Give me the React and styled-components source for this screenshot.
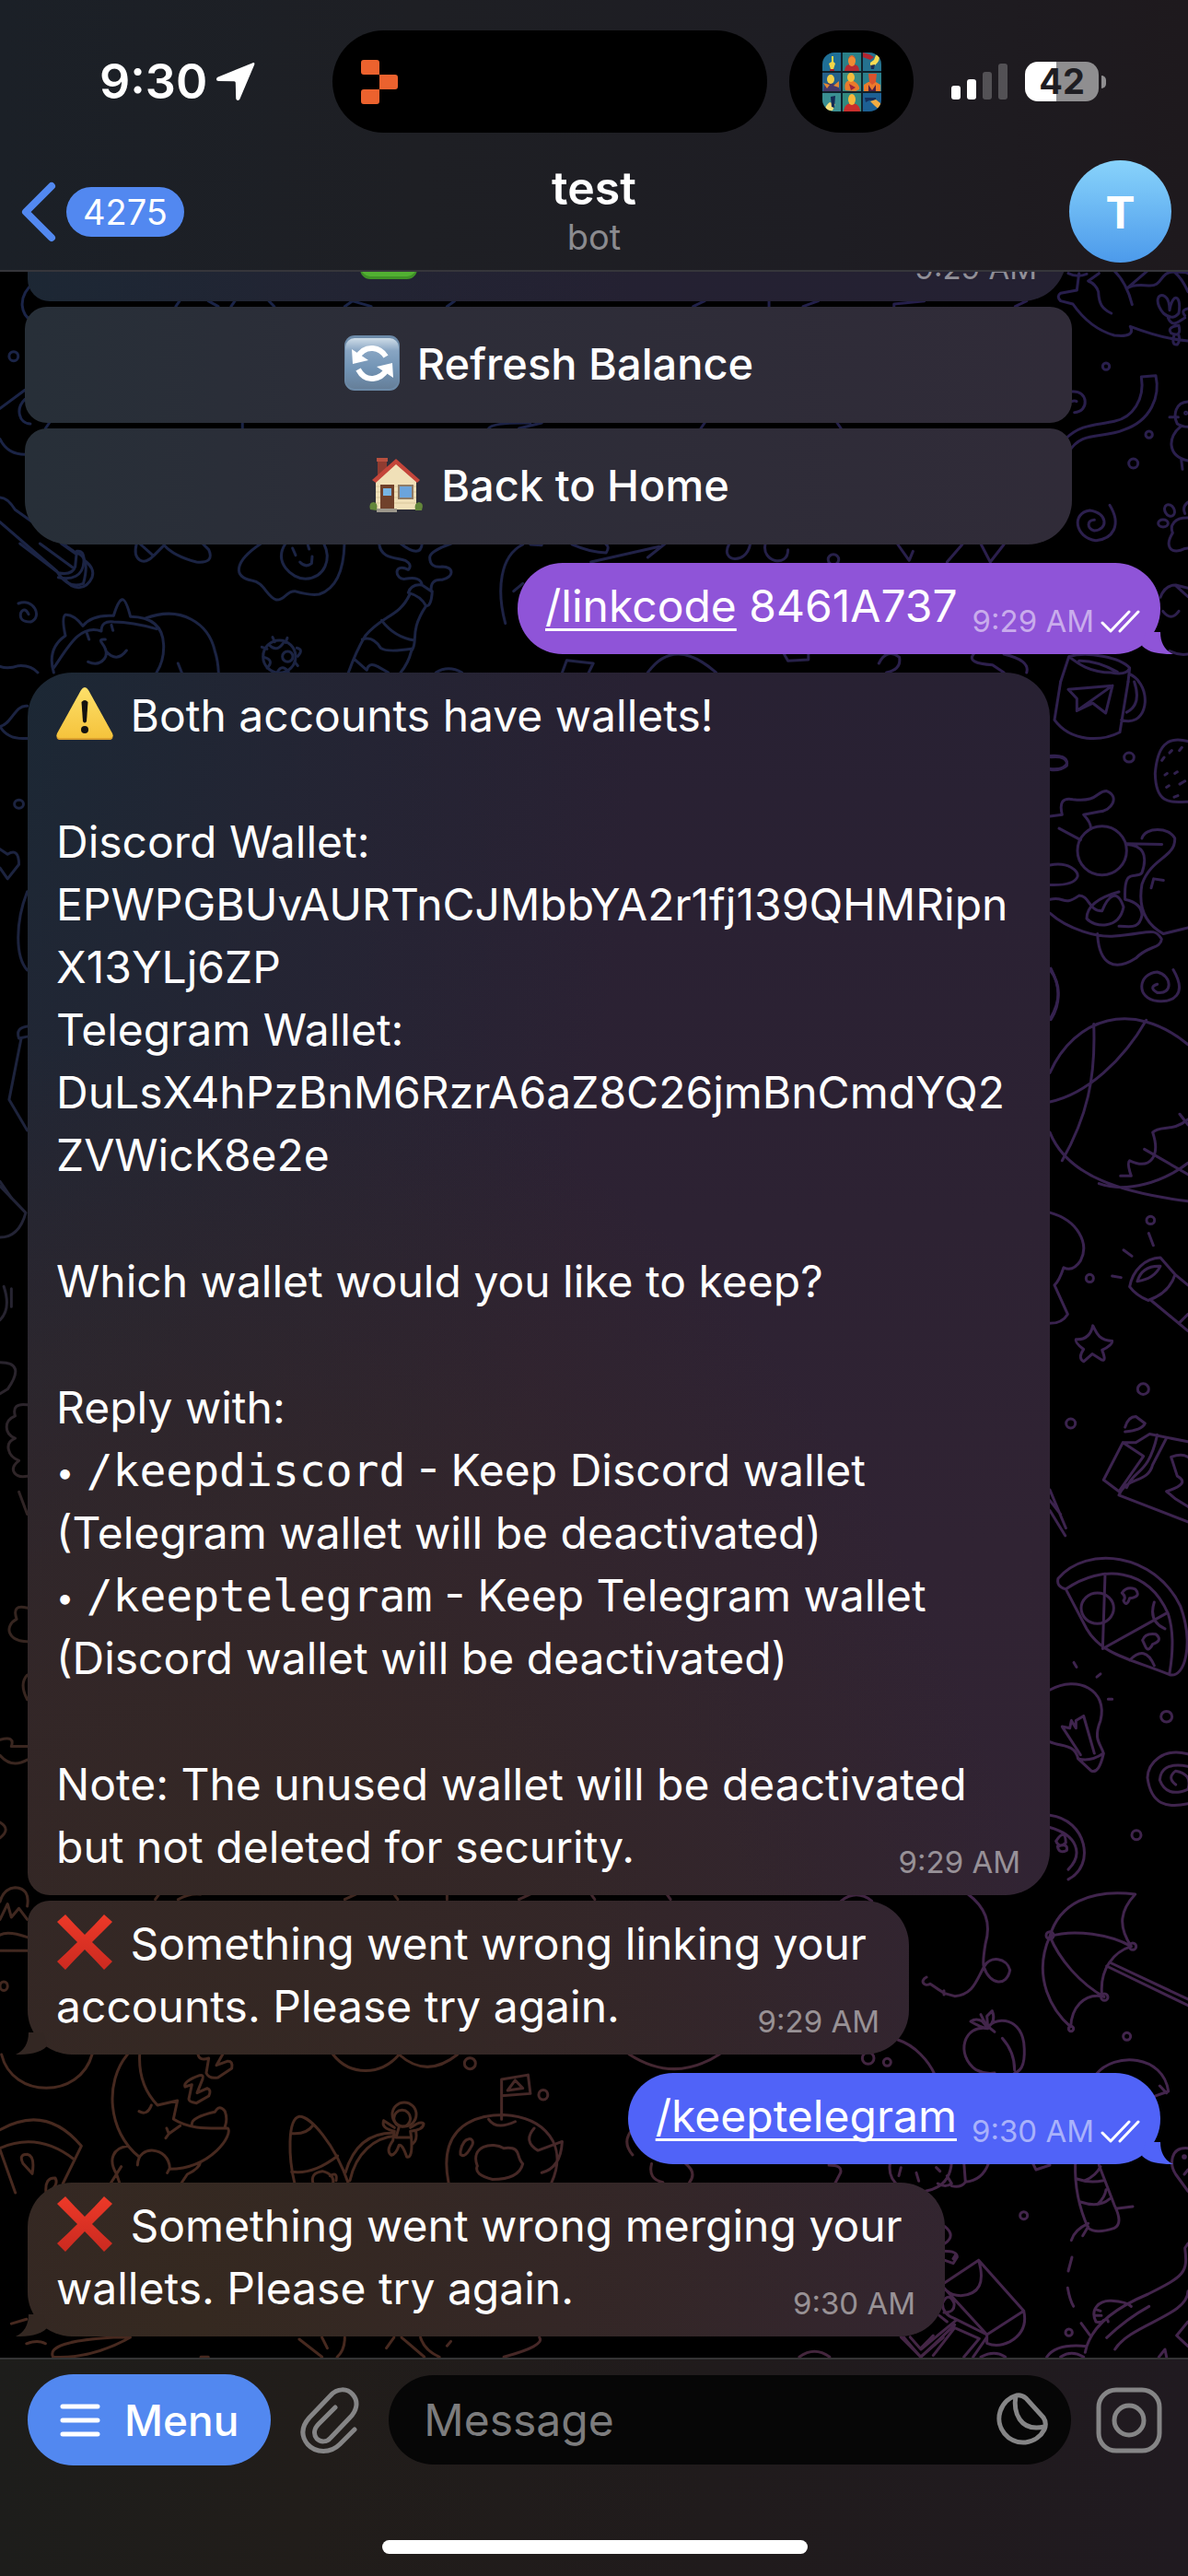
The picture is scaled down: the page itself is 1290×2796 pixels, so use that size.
import React from "react";
import styled, { createGlobalStyle } from "styled-components";

const GlobalStyle = createGlobalStyle`
  * { box-sizing: border-box; }
  html, body { margin: 0; background: #000; }
  body { font-family: Inter, "Liberation Sans", sans-serif; color: #fff; }
  button, input { font: inherit; color: inherit; border: 0; margin: 0; padding: 0; background: none; }
  button { cursor: pointer; }
  svg { display: block; }
`;

const Screen = styled.div`
  display: flex;
  flex-direction: column;
  height: 100vh;
  overflow: hidden;
`;

/* ---------- header ---------- */

const Header = styled.header`
  position: relative;
  padding: 33px 0 8px;
  border-bottom: 2px solid #36363b;
  background: linear-gradient(90deg, #1b2027 0%, #1e1f24 35%, #1e1d23 70%, #1e191d 100%);
`;

const StatusBar = styled.div`
  display: grid;
  grid-template-columns: 28% auto 1fr;
  align-items: center;
  height: 111px;
`;

const Clock = styled.div`
  display: flex;
  align-items: center;
  gap: 9px;
  padding-left: 108px;
  font-size: 52px;
  font-weight: 600;
`;

const Islands = styled.div`
  display: flex;
  gap: 24px;
`;

const Island = styled.div`
  display: flex;
  align-items: center;
  justify-content: ${(p) => (p.$center ? "center" : "flex-start")};
  width: ${(p) => p.$width}px;
  height: 111px;
  padding: ${(p) => (p.$center ? "0" : "0 31px")};
  border-radius: 56px;
  background: #000;
`;

const Indicators = styled.div`
  display: flex;
  align-items: center;
  gap: 19px;
  padding-left: 41px;
`;

const BatteryBox = styled.div`
  display: flex;
  align-items: center;
  gap: 3px;
`;

const BatteryLevel = styled.div`
  width: 80px;
  height: 43px;
  border-radius: 14px;
  background: linear-gradient(90deg, #fff 42%, #8f8e90 42%);
  color: #1e1d22;
  font-size: 38px;
  font-weight: 700;
  line-height: 43px;
  text-align: center;
`;

const BatteryCap = styled.div`
  width: 5px;
  height: 14px;
  border-radius: 0 5px 5px 0;
  background: #8f8e90;
`;

const NavBar = styled.nav`
  display: grid;
  grid-template-columns: 1fr auto 1fr;
  align-items: center;
  height: 111px;
  margin-top: 30px;
  padding: 0 18px;
`;

const BackButton = styled.button`
  display: flex;
  align-items: center;
  justify-self: start;
  gap: 10px;
  margin-left: 4px;
`;

const Badge = styled.span`
  padding: 0 18px;
  border-radius: 27px;
  background: #5288f0;
  font-size: 38px;
  line-height: 54px;
`;

const Titles = styled.div`
  align-self: start;
  text-align: center;
`;

const Title = styled.h1`
  margin: 0;
  font-size: 50px;
  font-weight: 600;
  line-height: 60px;
`;

const Subtitle = styled.p`
  margin: 0;
  color: #8b8b8f;
  font-size: 38px;
  line-height: 46px;
`;

const Avatar = styled.div`
  justify-self: end;
  width: 111px;
  height: 111px;
  border-radius: 50%;
  background: linear-gradient(#88d3fb, #4c9aeb);
  font-size: 48px;
  font-weight: 700;
  line-height: 113px;
  text-align: center;
`;

/* ---------- conversation ---------- */

const Conversation = styled.main`
  position: relative;
  display: flex;
  flex: 1 1 0;
  flex-direction: column;
  justify-content: flex-end;
  min-height: 0;
  overflow: hidden;
  padding: 0 30px 23px;
`;

const Wallpaper = styled.svg`
  position: absolute;
  inset: 0;
  width: 100%;
  height: 100%;
  path, circle, ellipse { vector-effect: non-scaling-stroke; }
`;

const Bubble = styled.article`
  position: relative;
  display: grid;
  flex: none;
  width: min(100%, ${(p) => p.$width}px);
  margin-top: ${(p) => (p.$joined ? 6 : 20)}px;
  padding: 13px 32px 18px 31px;
  border-radius: ${(p) => p.$corners};
  background:
    radial-gradient(ellipse 75% 50% at 16% 90%, #352920 0%, #342725d9 50%, #33262600 100%),
    radial-gradient(ellipse 60% 60% at -6% 22%, #192935 0%, #20273499 55%, #21263300 100%),
    linear-gradient(#242132 10%, #2a2133 35%, #302333 60%, #322433 90%);
  background-attachment: fixed;
  font-size: 48px;
  line-height: 68px;
`;

const Copy = styled.div`
  grid-area: 1 / 1;
  display: flex;
  flex-direction: column;
  gap: 69px;
`;

const Paragraph = styled.p`
  margin: 0;
  white-space: nowrap;
  padding-left: ${(p) => p.$indent || 0}px;
`;

const Bullet = styled.span`
  font-size: 34px;
  line-height: 1;
  vertical-align: 3px;
`;

const Command = styled.code`
  font-family: "DejaVu Sans Mono", monospace;
  font-size: 48px;
  line-height: 1;
`;

const Time = styled.time`
  grid-area: 1 / 1;
  place-self: end;
  color: ${(p) => p.$color || "rgba(255,255,255,0.5)"};
  font-size: 33px;
  line-height: 36px;
`;

const SentBubble = styled.article`
  position: relative;
  display: flex;
  flex: none;
  align-self: flex-end;
  align-items: flex-end;
  margin-top: 20px;
  padding: 13px 22px 18px 30px;
  border-radius: 49px;
  background: ${(p) => p.$color};
  font-size: 48px;
  line-height: 68px;
`;

const SentMeta = styled.div`
  display: flex;
  align-items: center;
  gap: 7px;
  margin-left: 16px;
`;

const CommandLink = styled.a`
  color: #fff;
  text-decoration: underline;
  text-decoration-thickness: 3px;
  text-decoration-skip-ink: none;
  text-underline-offset: 7px;
`;

const TailShape = styled.svg`
  position: absolute;
  bottom: 0;
  ${(p) => (p.$side === "left" ? "left: -13px; transform: scaleX(-1);" : "right: -14px;")}
`;

const InlineKeyboard = styled.div`
  display: flex;
  flex: none;
  flex-direction: column;
  gap: 6px;
  width: min(100% + 6px, 1137px);
  margin: 6px 0 0 -3px;
`;

const KeyButton = styled.button`
  position: relative;
  display: flex;
  align-items: center;
  justify-content: center;
  gap: 18px;
  height: 126px;
  padding-bottom: 4px;
  border-radius: ${(p) => (p.$last ? "24px 24px 48px 48px" : "24px")};
  background: linear-gradient(90deg, #272f38, #2d2d38 38%, #302b38);
  font-size: 47px;
  font-weight: 500;
`;

const EmojiSvg = styled.svg`
  display: inline-block;
  width: 62px;
  height: 60px;
  margin-right: ${(p) => (p.$inText ? 5 : 0)}px;
  vertical-align: -11px;
`;

/* ---------- composer ---------- */

const Composer = styled.footer`
  padding: 16px 28px 24px 30px;
  border-top: 2px solid #343435;
  background: linear-gradient(90deg, #1d1d1b, #211d1a 25%, #201b1c 60%, #201a20 100%);
`;

const InputRow = styled.form`
  display: flex;
  align-items: center;
  height: 99px;
`;

const MenuButton = styled.button`
  display: flex;
  align-items: center;
  gap: 26px;
  height: 99px;
  padding: 0 35px;
  border-radius: 50px;
  background: #5288f0;
  font-size: 46px;
  font-weight: 500;
`;

const AttachButton = styled.button`
  margin: 0 32px;
`;

const Field = styled.div`
  display: flex;
  flex: 1;
  align-items: center;
  min-width: 0;
  height: 97px;
  margin-right: 27px;
  padding: 0 25px 0 38px;
  border-radius: 49px;
  background: #060606;
`;

const MessageInput = styled.input`
  flex: 1;
  min-width: 0;
  outline: none;
  font-size: 48px;
  &::placeholder { color: #7c7c7d; opacity: 1; }
`;

const HomeIndicator = styled.div`
  width: 37.5%;
  height: 15px;
  margin: 81px auto 0;
  border-radius: 8px;
  background: #fff;
`;

/* ---------- drawings ---------- */

const LocationIcon = () => (
  <svg width="43" height="43" viewBox="0 0 43 43" fill="#fff">
    <path d="M40.500 1.200C42 .8 42.800 1.800 42.200 3.300L26.500 40.300C25.500 42.800 22.300 42.500 22.200 39.600L21.800 22.800Q21.800 21.300 20.300 21.300L3.500 20.900C.4 20.800 .2 17.600 2.900 16.500Z" />
  </svg>
);

const SignalIcon = () => (
  <svg width="61" height="40" viewBox="0 0 61 40" fill="#fff">
    <rect x="0" y="24" width="10" height="15" rx="3" />
    <rect x="17" y="17" width="10" height="22" rx="3" />
    <rect x="34" y="9" width="10" height="30" rx="3" opacity=".24" />
    <rect x="51" y="0" width="10" height="39" rx="3" opacity=".24" />
  </svg>
);

const BlocksLogo = () => (
  <svg width="40" height="48" viewBox="0 0 40 48" fill="#ec622e">
    <path d="M3 0H17Q20 0 20 3V16H3Q0 16 0 13V3Q0 0 3 0ZM20 16H37Q40 16 40 19V29Q40 32 37 32H20ZM3 32H20V45Q20 48 17 48H3Q0 48 0 45V35Q0 32 3 32Z" />
  </svg>
);

const thermalCells = [
  [0, 0, "#1f6f96"], [22, 0, "#2a8088"], [44, 0, "#25728e"],
  [0, 22, "#25618a"], [22, 22, "#3a8b82"], [44, 22, "#2b7f8c"],
  [0, 44, "#3a8f92"], [22, 44, "#318a80"], [44, 44, "#1d6093"],
];

const ThermalPhoto = () => (
  <svg width="64" height="64" viewBox="0 0 64 64">
    <clipPath id="photoClip"><rect width="64" height="64" rx="13" /></clipPath>
    <g clipPath="url(#photoClip)">
      <rect width="64" height="64" fill="#10222c" />
      {thermalCells.map(([x, y, fill]) => <rect key={`${x}-${y}`} x={x} y={y} width="20" height="20" fill={fill} />)}
      <path d="M10 4L12 4L12 10L14 12L12 18H9L7 12L10 10Z" fill="#f4d648" />
      <path d="M8 18H13V20H8Z" fill="#a3202f" />
      <path d="M24 20Q25 13 29 13H35Q40 14 40 20Z" fill="#b52a31" />
      <ellipse cx="32" cy="9" rx="4" ry="6" fill="#ef8b33" />
      <path d="M28 7Q32 1 36 7L35 5Q32 2 29 5Z" fill="#b52a31" />
      <path d="M44 0L51 2L56 5L52 8L44 5Z" fill="#b32631" />
      <path d="M62 2Q63 9 57 14L52 16L52 11L56 8L58 3Z" fill="#f5db55" />
      <path d="M52 14L57 13L56 18H53Z" fill="#182c57" />
      <path d="M1 42Q2 33 8 33L15 35L20 42Z" fill="#47396a" />
      <ellipse cx="9" cy="29" rx="4" ry="5" fill="#f5cf48" />
      <path d="M1 33L8 35L5 39ZM12 36L18 31L18 38Z" fill="#e28834" />
      <path d="M25 41Q23 34 27 31L34 31Q41 35 40 40L36 42Z" fill="#e97b2c" />
      <ellipse cx="31" cy="27" rx="4" ry="5" fill="#f4bb3c" />
      <path d="M29 34L36 38L31 41Z" fill="#9f2139" />
      <path d="M45 42V35L50 32H58L63 35V42Z" fill="#eb7b2b" />
      <path d="M50 23H59L58 32L54 35L51 32Z" fill="#d9532c" />
      <path d="M50 35L54 41L58 35V42H50Z" fill="#512043" />
      <path d="M2 64Q4 56 8 54L14 56L11 63Z" fill="#f3df7c" />
      <path d="M9 48L14 47L13 60L10 59Z" fill="#132a55" />
      <path d="M23 64Q24 56 30 55H34Q41 57 41 64Z" fill="#c92e2c" />
      <ellipse cx="32" cy="51" rx="4" ry="6" fill="#f6b83c" />
      <path d="M46 49H58V52H51L47 54Z" fill="#14305d" />
      <path d="M52 53L58 51L63 55V63L57 58Z" fill="#f2ad42" />
    </g>
  </svg>
);

const BackChevron = () => (
  <svg width="40" height="66" viewBox="0 0 40 66" fill="none" stroke="#5288f0" strokeWidth="8" strokeLinecap="round" strokeLinejoin="round">
    <path d="M34 5L6 33L34 61" />
  </svg>
);

const Checks = () => (
  <svg width="43" height="25" viewBox="0 0 43 25" fill="none" stroke="#fff" strokeWidth="3" strokeLinecap="round" strokeLinejoin="round">
    <path d="M2 14L11 23L31 2M21 23L41 2" />
  </svg>
);

const Tail = ({ side, color }) => (
  <TailShape $side={side} width="40" height="24" viewBox="0 0 40 24" fill={color} aria-hidden="true">
    <path d="M26 0C26 12 31 20 40 24C26 24 14 23 6 15L10 0Z" />
  </TailShape>
);

const RefreshEmoji = () => (
  <EmojiSvg viewBox="0 0 60 60">
    <defs><linearGradient id="refreshFill" x1="0" y1="0" x2="0" y2="1"><stop offset="0" stopColor="#cfdde8" /><stop offset=".25" stopColor="#88a5c3" /><stop offset=".6" stopColor="#7294b5" /><stop offset="1" stopColor="#667f99" /></linearGradient></defs>
    <rect width="60" height="60" rx="11" fill="#6c8aa8" />
    <rect x="1" y="3" width="58" height="55" rx="10" fill="url(#refreshFill)" />
    <g fill="none" stroke="#fff" strokeWidth="6">
      <path d="M14 24Q20 13 31 14Q40 15 45 23" />
      <path d="M15 37Q21 48 31 47Q41 46 46 37" />
    </g>
    <path d="M8 15L9 31L26 27Z" fill="#fff" />
    <path d="M53 46L52 30L35 34Z" fill="#fff" />
  </EmojiSvg>
);

const HouseEmoji = () => (
  <EmojiSvg viewBox="0 0 60 60">
    <path d="M10 2H20V14L10 24Z" fill="#8f3b30" /><path d="M9 1H21V5H9Z" fill="#b7503f" />
    <path d="M8 26L30 4L52 26V57H8Z" fill="#f0e0b8" />
    <path d="M8 32H52M8 38H52M8 44H52M8 50H52" stroke="#d9c79c" strokeWidth="1" />
    <path d="M4 25L30 2L56 25L53 28L30 8L8 28Z" fill="#c4453a" />
    <rect x="13" y="30" width="15" height="27" fill="#70412b" /><rect x="16" y="34" width="9" height="8" fill="#77b5e3" />
    <rect x="32" y="30" width="17" height="16" fill="#8e7b66" /><rect x="34" y="32" width="13" height="12" fill="#6ba4dc" />
    <rect x="9" y="56" width="22" height="4" fill="#9c978c" />
    <path d="M2 57Q0 49 6 49Q11 50 9 58ZM51 58Q49 50 55 49Q61 50 58 58Z" fill="#63863a" />
  </EmojiSvg>
);

const WarningEmoji = () => (
  <EmojiSvg $inText viewBox="0 0 62 60" aria-label="Warning">
    <defs><linearGradient id="warnFill" x1="0" y1="0" x2="0" y2="1"><stop offset="0" stopColor="#fde06a" /><stop offset="1" stopColor="#f5c33c" /></linearGradient></defs>
    <path d="M27 5Q31 -1 35 5L61 52Q63 58 57 58H5Q-1 58 1 52Z" fill="#d99f2e" />
    <path d="M27 4Q31 -2 35 4L61 51Q63 56 57 56H5Q-1 56 1 51Z" fill="url(#warnFill)" />
    <path d="M27.500 17Q31 13 34.500 17L33 38Q31 41 29 38Z" fill="#141210" /><circle cx="31" cy="47" r="4" fill="#141210" />
  </EmojiSvg>
);

const CrossEmoji = () => (
  <EmojiSvg $inText viewBox="0 0 62 60" aria-label="Error">
    <defs><linearGradient id="crossFill" x1="0" y1="0" x2="0" y2="1"><stop offset="0" stopColor="#ed3928" /><stop offset="1" stopColor="#cb2a20" /></linearGradient></defs>
    <path d="M10 0Q20 11 31 22Q42 11 52 0L61 8Q50 19 39 30Q50 41 61 51L52 60Q42 49 31 38Q20 49 10 60L1 51Q12 41 23 30Q12 19 1 8Z" fill="url(#crossFill)" />
  </EmojiSvg>
);

const CheckEmoji = () => (
  <EmojiSvg viewBox="0 0 62 60">
    <rect width="62" height="60" rx="11" fill="#3f9127" /><rect x="1" y="1" width="60" height="56" rx="10" fill="#52b032" />
    <path d="M15 33L26 46L46 13" fill="none" stroke="#fff" strokeWidth="7" />
  </EmojiSvg>
);

const MenuLines = () => (
  <svg width="44" height="36" viewBox="0 0 44 36" stroke="#fff" strokeWidth="5" strokeLinecap="round">
    <path d="M3 3H41M3 18H41M3 33H41" />
  </svg>
);

const ClipIcon = () => (
  <svg width="64" height="72" viewBox="0 0 64 72" fill="none" stroke="#858586" strokeWidth="5" strokeLinecap="round" strokeLinejoin="round">
    <path d="M59 46L43 62C33 72 17 72 8 62C0 52 2 42 10 33L33 9C40 1 51 1 57 8C64 16 61 26 54 33L33 55C29 60 22 60 18 56C14 51 15 45 20 40L38 22" />
  </svg>
);

const StickerIcon = () => (
  <svg width="58" height="60" viewBox="0 0 58 60" fill="none" stroke="#858586" strokeWidth="5" strokeLinejoin="round">
    <path d="M24 3Q29 2 34 6L53 27Q57 33 54 40A26 26 0 1 1 24 3Z" />
    <path d="M23 3C20 21 27 43 54 37" />
  </svg>
);

const CameraIcon = () => (
  <svg width="72" height="72" viewBox="0 0 72 72" fill="none" stroke="#858586" strokeWidth="5">
    <rect x="3" y="3" width="66" height="66" rx="19" /><circle cx="36" cy="36" r="16" />
  </svg>
);

/* Line art of the chat wallpaper. Each group keeps its own drawing scale. */
const Doodles = () => (
  <g fill="none" stroke="#fff" strokeWidth="3" strokeLinecap="round" strokeLinejoin="round">
    <g transform="translate(1140 290) scale(.33333)">
      <path d="M95 20L88 75L35 85Q20 95 35 110L75 120C110 170 150 205 210 222Q280 230 262 193C320 215 380 235 450 240" />
      <path d="M60 20Q90 35 120 22M160 20L125 45Q150 55 158 80C160 120 170 135 200 150M208 10C235 35 255 70 268 122M320 10L250 70Q270 55 320 60C370 65 355 15 405 15Q440 15 450 20M405 15Q430 35 450 80" />
      <path d="M390 140C400 80 430 90 420 150Q400 175 370 150C340 115 350 80 375 95Q390 105 390 140M385 165C400 200 420 175 440 165M420 190Q380 195 395 215Q430 230 420 190M405 220Q395 255 415 252Q425 240 420 222M450 135Q425 140 440 158" />
      <circle cx="183" cy="323" r="11" /><circle cx="323" cy="545" r="11" /><circle cx="272" cy="639" r="15" />
      <path d="M72 405C125 400 130 470 80 473M72 437Q80 433 87 437" />
      <path d="M298 357L345 353C360 420 330 500 240 530C170 560 100 530 60 605M298 357C310 430 270 490 210 502C150 515 100 510 50 560" />
      <path d="M195 775C235 840 205 885 150 890C80 880 70 800 130 792C190 800 190 855 145 858C120 850 120 825 145 823" />
      <path d="M450 438C410 440 400 480 415 510Q430 520 450 520M425 520C385 550 380 615 450 630M390 488H418M428 625L432 658" /><circle cx="443" cy="475" r="3" />
      <ellipse cx="390" cy="792" rx="15" ry="20" transform="rotate(-30 390 792)" /><ellipse cx="369" cy="834" rx="16" ry="12" />
      <path d="M450 765Q430 780 440 802M450 816C405 815 390 840 400 865C375 905 390 930 425 922Q440 915 450 915" />
      <path d="M360 1075Q375 1035 410 1035L450 1045M410 1037L450 1073M368 1120Q395 1155 420 1120M390 1250Q420 1265 450 1260" />
      <path d="M35 1350L62 1268C120 1250 230 1270 260 1305Q250 1330 200 1320C130 1320 90 1290 62 1268M95 1282Q150 1280 220 1318M260 1305L255 1350M260 1325Q280 1335 290 1350" />
    </g>
    <g transform="translate(1080 740) scale(.33333 .829)">
      <path d="M215 0L195 50C250 80 350 78 408 66L435 0M413 50C490 60 510 20 470 0M430 40Q480 30 455 0M240 10L384 5L362 41L320 28L268 38V22ZM268 38L384 5" />
      <path d="M180 97Q235 95 236 107Q225 116 180 114" /><ellipse cx="438" cy="99" rx="16" ry="6" /><ellipse cx="508" cy="705" rx="13" ry="5" /><ellipse cx="310" cy="781" rx="12" ry="5" /><ellipse cx="484" cy="926" rx="18" ry="7" /><ellipse cx="248" cy="971" rx="15" ry="6" /><ellipse cx="560" cy="1355" rx="18" ry="7" /><ellipse cx="462" cy="1510" rx="15" ry="6" />
      <path d="M630 78C560 70 530 85 523 120C525 160 570 158 630 157M545 103L552 99M570 93L577 90M602 90L610 86M555 122L562 120M587 120L595 118M560 138L568 136M603 134L620 130M585 151L597 149" />
      <path d="M180 176L220 174Q205 150 255 154C340 158 330 143 365 143C410 150 380 170 340 170L290 174Q315 185 313 192M210 192L280 207M180 240C240 235 275 248 270 255Q260 267 180 266M180 285C230 280 220 295 275 280C310 280 305 300 350 300C370 280 400 270 420 295C405 325 325 322 300 310C300 290 360 280 405 275M180 303C240 325 340 335 390 333C500 330 520 320 544 337C540 350 500 345 460 362C390 380 340 370 335 330" />
      <ellipse cx="350" cy="221" rx="80" ry="32" /><path d="M430 212L545 213M480 205C490 190 570 190 587 205C590 230 510 230 480 265Q460 310 550 330L630 322M430 213Q510 215 480 250C460 260 420 240 425 285Q480 290 480 306C470 325 440 320 405 320M510 270L518 258L550 260" />
      <path d="M180 377Q235 405 180 442M582 377C630 410 580 420 530 418C460 415 465 382 530 380C580 385 580 410 530 407Q500 400 530 396" />
      <path d="M180 512C260 440 450 415 630 475M180 590C240 650 430 670 630 680M180 550C300 540 420 495 494 443M323 448C330 520 300 570 220 627M340 657C430 670 550 655 630 630M410 647H445Q430 630 440 627C510 640 540 620 515 590C540 580 580 590 630 573M488 612L630 645M603 566L630 580" />
      <path d="M180 695C270 705 310 735 280 758C260 770 240 770 225 767Q210 785 195 790L238 828Q220 840 180 840M502 722L517 738M420 744L447 752M383 778L412 780M440 792C450 770 490 755 540 754L588 776Q570 800 500 810Q460 803 440 792M465 785Q480 764 540 765Q520 782 465 785M588 776L630 790M510 810L630 850M600 840L630 828" />
      <path d="M320 843C330 850 335 862 383 863Q385 868 350 875Q365 890 350 888L318 880L290 890Q270 885 290 874Q260 865 265 861Q310 862 320 843Z" />
      <path d="M355 1045L418 996H460L505 985L630 995M355 1045L405 1060L485 1014L418 996M405 1065C430 1040 500 1050 515 1025L560 990M430 1055C455 1030 500 1040 530 986M405 1065L630 1100M425 976Q435 962 460 962L490 971Q480 980 425 982M575 1015Q610 1010 630 1015M575 1015L595 1040Q640 1050 560 1060L590 1070L630 1080" />
      <path d="M180 1058L232 1108M180 1085L230 1118M180 1072L215 1090M207 1174C300 1130 520 1140 605 1210C650 1260 620 1305 570 1300C450 1280 350 1275 300 1240L232 1188Q200 1185 207 1174M232 1188C350 1155 500 1160 565 1220Q590 1250 570 1298M360 1168L352 1266L558 1220M440 1281Q490 1260 520 1288M555 1240Q500 1230 520 1205" /><ellipse cx="335" cy="1213" rx="53" ry="20" />
      <path d="M415 1193Q430 1184 458 1188Q480 1198 440 1200Q430 1212 420 1203Q430 1198 415 1193M482 1255Q490 1245 525 1247Q550 1255 515 1260Q500 1272 490 1262Z" />
      <path d="M180 1320C270 1300 370 1320 345 1360C320 1385 345 1390 355 1403Q340 1430 315 1426L272 1410C260 1390 220 1395 180 1388M272 1410Q310 1415 355 1403M325 1403L290 1354L265 1360V1370L250 1360L245 1370L220 1368L280 1405M258 1284L267 1290M345 1299L333 1303M370 1332H383" />
      <path d="M630 1404C550 1395 500 1415 498 1435C510 1470 560 1475 630 1469M630 1420C560 1415 540 1425 538 1438Q560 1462 630 1450Q645 1430 590 1426Q560 1435 590 1444" />
      <path d="M180 1484C300 1490 330 1550 240 1568M180 1500C270 1510 290 1535 240 1555M200 1518Q230 1500 232 1520Q210 1528 200 1518M205 1525Q240 1520 235 1530Q210 1535 205 1525" />
    </g>
    <g transform="translate(900 2050) scale(.33333)">
      <path d="M40 40Q90 0 140 40M450 15C510 60 530 110 510 180Q500 240 505 255C525 215 580 225 590 265C580 320 525 315 505 255C480 300 470 345 410 350L375 340L330 310C310 320 295 300 318 288M375 332L375 345" />
      <path d="M720 155C750 50 850 0 998 18C950 70 940 120 985 188C930 205 880 260 890 350C830 340 790 390 788 450C730 400 660 290 720 155ZM720 155C800 130 920 150 985 188M720 155C750 230 820 310 897 352M915 240L1170 360M905 252L1170 380" />
      <circle cx="720" cy="152" r="12" /><circle cx="990" cy="188" r="11" /><circle cx="898" cy="353" r="11" /><circle cx="789" cy="456" r="8" /><circle cx="971" cy="481" r="12" /><circle cx="128" cy="552" r="19" /><circle cx="190" cy="565" r="12" /><circle cx="635" cy="1064" r="12" /><circle cx="782" cy="1445" r="11" />
      <path d="M518 455C440 440 410 540 480 590Q510 605 540 600M518 455C530 420 620 410 635 500Q645 590 605 600M565 487C590 515 605 550 605 590M518 455Q490 450 462 432Q480 420 500 432L515 450L495 410M518 455L515 415L532 398Q545 430 520 450L540 466" />
      <path d="M225 492C280 510 325 560 345 605M870 605C930 530 1090 540 1106 660L1060 676M1078 642L1100 665" />
      <path d="M200 890Q190 940 230 970M235 908L228 935M285 925L293 952M350 908L362 920M315 985Q395 970 400 890M355 960Q380 975 400 960L385 935M440 890L445 955Q430 975 400 968M520 895Q500 950 445 955M0 900Q45 900 38 925L20 960M665 895L675 915L720 900" />
      <path d="M803 895C800 980 820 1050 845 1105Q870 1125 930 1105Q960 1090 930 1030L880 900M808 945Q850 960 895 950M820 1020Q880 1040 915 1010M835 950Q870 935 885 905M875 1028Q900 1005 903 980M935 1042L990 1035M790 1145Q800 1110 845 1090M827 1130L845 1100M792 1200L780 1245M778 1300Q785 1340 797 1360M822 1415L850 1453" />
      <path d="M1170 845C1110 840 1110 900 1130 930L1170 985M1158 930L1170 915" /><circle cx="1158" cy="873" r="4" />
      <path d="M378 1100Q415 1130 378 1155M375 1180Q420 1180 418 1200L405 1220L378 1210M415 1190L405 1205M375 1285L488 1210L635 1375L515 1452L375 1300M488 1210Q520 1320 430 1325Q400 1325 385 1310M635 1375Q650 1440 590 1475Q550 1495 515 1480L515 1452M515 1452L410 1400Q370 1385 370 1350Q390 1310 408 1350Q412 1380 375 1380M300 1500L415 1405M235 1460L300 1525L410 1420M340 1520L410 1430L490 1465L440 1525M515 1460L470 1525M360 1390L385 1410M265 1460L298 1498L340 1455M495 1525Q540 1500 575 1525" />
      <path d="M710 1525Q740 1480 840 1490L835 1510M755 1525Q790 1500 830 1525M835 1510C850 1430 920 1370 1040 1320C1160 1260 1170 1250 1160 1170L1170 1155M905 1462Q970 1400 1043 1360M932 1500C980 1420 1170 1390 1170 1310M870 1410C850 1370 880 1340 920 1342Q970 1345 985 1360M870 1410Q890 1415 895 1405Q910 1400 910 1410M870 1370L885 1375M868 1390L888 1390M1170 1410L1133 1455L1170 1490M1075 1525L1095 1500L1100 1525" />
    </g>
    <g transform="translate(0 2230) scale(.33333)">
      <path d="M5 0C40 145 260 145 300 0M1085 0C1140 70 1240 70 1300 0Q1390 80 1490 0M0 245Q150 160 265 298L205 420M0 305Q125 250 242 342M0 310L50 450M88 325Q60 325 75 355L105 388Q115 330 88 325M150 450Q145 400 180 402Q190 420 170 440" /><circle cx="1531" cy="29" r="18" />
      <path d="M415 0C340 90 350 250 453 333M455 0Q450 100 513 165L578 150L565 210C620 245 680 240 742 240C760 260 690 370 553 373M453 185Q480 200 493 165M543 240L550 258L587 232M550 258L540 272M625 230Q620 205 700 187Q715 160 733 185Q742 210 733 235M448 360C450 290 550 300 553 370L545 385M415 298C370 305 350 340 380 390L390 420M395 365L360 420M653 350Q650 370 610 390L590 420" />
      <path d="M645 0Q650 22 680 12L672 60Q680 80 710 75L755 45Q760 20 740 22L705 35L725 0M603 105Q595 88 650 68Q665 65 660 80L642 125L675 110Q690 115 680 135L640 158Q615 155 615 145L625 98Z" />
      <path d="M960 420C940 340 935 210 975 202C1010 200 1090 290 1135 420M952 257Q1000 260 1020 230M950 382C1010 390 1060 360 1100 330M1020 420Q1010 385 1050 380Q1090 390 1085 420M1075 395Q1100 380 1095 410M1125 385C1150 300 1200 255 1280 255M1140 410C1160 320 1220 270 1290 265" />
      <circle cx="1317" cy="195" r="39" /><circle cx="1310" cy="208" r="27" />
      <path d="M1285 238L1250 215Q1240 240 1285 250L1280 280Q1255 315 1275 328Q1290 325 1300 295Q1310 290 1325 333Q1345 340 1340 270L1337 250Q1380 245 1380 225Q1370 215 1337 238M1300 235L1290 270H1340M1355 250Q1360 280 1345 290" />
      <path d="M1500 315C1510 260 1550 270 1538 295Q1515 340 1500 325Z" />
    </g>
    <g transform="translate(0 590) scale(.33333)">
      <path d="M65 0L190 95Q235 105 245 75L250 25Q275 20 273 60C270 105 235 120 190 110M130 0L240 80M200 0L250 35M275 55Q310 80 300 110C280 155 235 150 215 120M445 0C430 55 470 75 500 40L535 5Q565 40 640 60Q700 65 680 20L660 0M455 0L500 40" />
      <path d="M60 195C110 175 140 240 100 255Q60 255 68 225Q80 205 93 230M0 400Q25 410 60 398Q100 395 123 420M175 420C160 370 170 330 213 300Q200 240 213 232Q240 230 270 268Q300 230 370 235Q385 185 398 182Q410 180 425 238Q530 240 533 330Q535 380 510 420M175 405C220 340 260 260 330 285Q330 250 370 255Q430 255 510 278M475 243C590 200 680 260 700 350Q710 380 712 420M283 292L290 312M363 265L368 283M343 312Q320 310 333 325Q355 355 340 375Q320 400 287 385M345 350Q380 390 412 348M580 390L592 420" />
      <path d="M850 0C760 60 760 110 820 120C860 125 870 175 900 183C930 185 930 155 960 155Q1010 170 1040 165C1100 145 1120 80 1122 0M930 0C890 60 950 115 995 115C1060 110 1080 50 1055 0M953 15L963 38M1003 5L1007 18M977 60Q995 80 1015 65L1017 42" />
      <circle cx="910" cy="368" r="53" /><circle cx="937" cy="368" r="17" /><path d="M877 330Q900 355 922 325M860 370Q895 380 870 405M903 420Q918 390 940 418M888 305L895 320M936 307L930 322M853 337L870 343M967 340Q990 345 970 367M970 398L960 385" />
      <path d="M1235 0C1240 50 1290 45 1320 55Q1345 70 1330 85C1280 60 1285 120 1320 115Q1370 105 1375 135L1405 155Q1400 115 1440 118C1480 110 1480 75 1440 75Q1400 80 1400 45Q1400 25 1470 0M1305 0Q1370 50 1375 0M1375 135Q1340 130 1330 160Q1370 170 1388 203Q1405 205 1408 155M1335 165C1300 240 1250 230 1190 300Q1160 350 1135 420M1388 203C1330 290 1365 320 1340 350Q1330 390 1305 420M1243 250Q1285 305 1350 315M1180 312Q1215 300 1240 340Q1260 355 1340 343M1155 377L1195 412Q1200 385 1230 400L1265 420M1420 420Q1460 395 1505 420" />
    </g>
    <g transform="translate(0 280) scale(.8227 .33333)">
      <path d="M690 933C660 970 655 1080 667 1190M700 933L715 935M755 933Q780 960 800 960Q805 940 800 933M780 990L870 940M855 975L878 930M962 933C950 990 985 1000 990 933M1010 933C1005 990 1040 1010 1040 950M1185 933L1200 985L1205 955M1250 990L1270 933M1295 933L1307 990L1325 933" /><ellipse cx="1100" cy="982" rx="7" ry="17" />
      <path d="M690 1060L678 1085M742 1350L748 1310L783 1320L777 1350M855 1350Q890 1230 945 1350M1035 1290L1040 1312L1067 1308V1290M1160 1320Q1170 1270 1187 1300Q1190 1340 1170 1350M1285 1290Q1275 1320 1310 1325L1325 1350M1325 1290Q1360 1310 1355 1350M45 80C20 130 30 190 40 200M232 158L237 140M275 140L288 158M305 158L310 140M355 140L362 158M455 158L465 140L490 158M590 158L600 140M915 158L930 140M1015 158V140M1060 158L1080 140M1180 158V150L1220 140M1340 158L1355 140M645 555Q650 535 700 537M685 555L715 537M925 555L930 537M1105 537L1110 555M320 537V555M60 555L65 537M0 490L33 430M0 590Q10 640 33 640M33 460C20 490 25 540 40 540M0 780Q10 780 20 820L100 960Q120 970 110 1060Q90 1080 75 1020L0 860" /><ellipse cx="18" cy="320" rx="6" ry="15" />
    </g>
    <g transform="translate(0 720) scale(.8227 .37)">
      <path d="M36 125C20 120 15 180 0 185Q10 225 36 220M0 545L10 560Q25 540 25 590L10 632L0 600M36 670C20 760 20 860 36 900M36 1065Q20 1070 25 1100L36 1095M28 1100L12 1280L36 1370M0 1520L15 1568M1387 275Q1410 270 1408 300Q1400 315 1387 312M1387 895C1400 950 1400 1000 1387 1045" /><ellipse cx="25" cy="413" rx="6" ry="12" />
    </g>
    <g transform="translate(0 1280) scale(.8227 .4847)">
      <path d="M0 15L34 75Q25 130 0 130M5 240Q15 290 0 315M15 245V285M0 410Q35 410 10 470L0 480M36 505Q15 500 20 530C5 540 5 570 20 580C5 590 10 620 25 630C10 650 20 670 36 665M25 700L36 750M36 960Q15 950 22 985C5 1000 10 1035 36 1035M36 1110Q25 1130 36 1165M0 1255Q20 1245 15 1270H36M0 1290Q15 1320 36 1300M0 1440Q15 1455 0 1475" />
    </g>
    <g transform="translate(0 2040) scale(.8227 .4821)">
      <path d="M0 50Q5 20 20 18Q40 20 36 60M0 90L10 55L15 85L25 65L36 90M0 125Q10 115 36 130M0 160H36M205 45L210 33M235 45Q250 30 265 33M455 45L470 33M520 33L525 45M590 33V45M685 45L700 33M780 33L785 45M880 33L885 45" /><ellipse cx="5" cy="240" rx="5" ry="10" />
      <path d="M592 682C580 580 610 530 665 530C720 535 750 600 728 682M662 540V450L697 440L700 482L662 487M670 475L680 452L690 470ZM645 540Q655 565 680 545M705 560Q690 590 710 610L742 590Q740 650 715 660M630 645C620 600 650 590 665 605C690 600 680 625 690 640Q685 675 650 675Q625 665 630 645M835 562Q820 590 835 620M860 640Q855 675 875 682M905 640Q920 660 910 682M830 393Q890 460 950 393M15 1000L35 990M35 1045Q50 1035 60 1045M70 1075Q60 1040 150 1031L172 1031Q120 1080 70 1075M275 1075L265 1075M395 1035L425 1075M425 1031L432 1055M455 1031Q455 1060 445 1075M510 1055L520 1031M530 1031L560 1075M555 1031Q560 1060 580 1075M595 1040L590 1050M665 1075Q720 1050 712 1031M1055 1075Q1075 1050 1095 1075M1193 1031L1215 1075L1245 1031" /><ellipse cx="717" cy="485" rx="6" ry="11" />
    </g>
  </g>
);

const ChatWallpaper = () => (
  <Wallpaper viewBox="0 295 1290 2264" preserveAspectRatio="xMidYMid slice" aria-hidden="true">
    <defs>
      <linearGradient id="coolWarm" gradientUnits="userSpaceOnUse" x1="0" y1="300" x2="0" y2="2300"><stop offset="0" stopColor="#1a2448" /><stop offset=".45" stopColor="#1d233c" /><stop offset=".72" stopColor="#352520" /><stop offset="1" stopColor="#47291f" /></linearGradient>
      <linearGradient id="violet" gradientUnits="userSpaceOnUse" x1="0" y1="300" x2="0" y2="2300"><stop offset="0" stopColor="#271e4c" /><stop offset=".5" stopColor="#38224f" /><stop offset="1" stopColor="#43254c" /></linearGradient>
      <linearGradient id="fade" x1="0" y1="0" x2="1" y2="0"><stop offset=".35" stopColor="#000" /><stop offset=".85" stopColor="#fff" /></linearGradient>
      <mask id="fadeMask"><rect y="290" width="1290" height="2280" fill="url(#fade)" /></mask>
      <mask id="doodleMask" maskUnits="userSpaceOnUse" x="0" y="290" width="1290" height="2280"><Doodles /></mask>
    </defs>
    <g mask="url(#doodleMask)">
      <rect y="290" width="1290" height="2280" fill="url(#coolWarm)" />
      <rect y="290" width="1290" height="2280" fill="url(#violet)" mask="url(#fadeMask)" />
    </g>
  </Wallpaper>
);

export default function App() {
  return (
    <Screen>
      <GlobalStyle />
      <Header>
        <StatusBar>
          <Clock>9:30<LocationIcon /></Clock>
          <Islands>
            <Island $width={472}><BlocksLogo /></Island>
            <Island $width={135} $center><ThermalPhoto /></Island>
          </Islands>
          <Indicators>
            <SignalIcon />
            <BatteryBox><BatteryLevel>42</BatteryLevel><BatteryCap /></BatteryBox>
          </Indicators>
        </StatusBar>
        <NavBar>
          <BackButton type="button" aria-label="Back, 4275 unread"><BackChevron /><Badge>4275</Badge></BackButton>
          <Titles><Title>test</Title><Subtitle>bot</Subtitle></Titles>
          <Avatar>T</Avatar>
        </NavBar>
      </Header>

      <Conversation>
        <ChatWallpaper />
        <Bubble $width={1128} $corners="48px 48px 48px 24px">
          <Copy><Paragraph $indent={330}><CheckEmoji /></Paragraph></Copy>
          <Time>9:29 AM</Time>
        </Bubble>
        <InlineKeyboard>
          <KeyButton type="button"><RefreshEmoji />Refresh Balance</KeyButton>
          <KeyButton type="button" $last><HouseEmoji />Back to Home</KeyButton>
        </InlineKeyboard>

        <SentBubble $color="#8f54d8">
          <span><CommandLink href="#linkcode">/linkcode</CommandLink> 8461A737</span>
          <SentMeta><Time $color="#c9acec">9:29 AM</Time><Checks /></SentMeta>
          <Tail side="right" color="#8f54d8" />
        </SentBubble>

        <Bubble $width={1110} $corners="48px 48px 48px 24px">
          <Copy>
            <Paragraph><WarningEmoji /> Both accounts have wallets!</Paragraph>
            <Paragraph>
              Discord Wallet:<br />
              EPWPGBUvAURTnCJMbbYA2r1fj139QHMRipn<br />
              X13YLj6ZP<br />
              Telegram Wallet:<br />
              DuLsX4hPzBnM6RzrA6aZ8C26jmBnCmdYQ2<br />
              ZVWicK8e2e
            </Paragraph>
            <Paragraph>Which wallet would you like to keep?</Paragraph>
            <Paragraph>
              Reply with:<br />
              <Bullet>•</Bullet> <Command>/keepdiscord</Command> - Keep Discord wallet<br />
              (Telegram wallet will be deactivated)<br />
              <Bullet>•</Bullet> <Command>/keeptelegram</Command> - Keep Telegram wallet<br />
              (Discord wallet will be deactivated)
            </Paragraph>
            <Paragraph>
              Note: The unused wallet will be deactivated<br />
              but not deleted for security.
            </Paragraph>
          </Copy>
          <Time>9:29 AM</Time>
        </Bubble>

        <Bubble $width={957} $joined $corners="24px 48px 48px 48px">
          <Copy><Paragraph><CrossEmoji /> Something went wrong linking your<br />accounts. Please try again.</Paragraph></Copy>
          <Time>9:29 AM</Time>
          <Tail side="left" color="#332723" />
        </Bubble>

        <SentBubble $color="#5063f8">
          <CommandLink href="#keeptelegram">/keeptelegram</CommandLink>
          <SentMeta><Time $color="#a9b2fb">9:30 AM</Time><Checks /></SentMeta>
          <Tail side="right" color="#5063f8" />
        </SentBubble>

        <Bubble $width={996} $corners="48px">
          <Copy><Paragraph><CrossEmoji /> Something went wrong merging your<br />wallets. Please try again.</Paragraph></Copy>
          <Time>9:30 AM</Time>
          <Tail side="left" color="#342822" />
        </Bubble>
      </Conversation>

      <Composer>
        <InputRow onSubmit={(e) => e.preventDefault()}>
          <MenuButton type="button"><MenuLines />Menu</MenuButton>
          <AttachButton type="button" aria-label="Attach"><ClipIcon /></AttachButton>
          <Field>
            <MessageInput type="text" placeholder="Message" aria-label="Message" />
            <button type="button" aria-label="Stickers"><StickerIcon /></button>
          </Field>
          <button type="button" aria-label="Camera"><CameraIcon /></button>
        </InputRow>
        <HomeIndicator />
      </Composer>
    </Screen>
  );
}
